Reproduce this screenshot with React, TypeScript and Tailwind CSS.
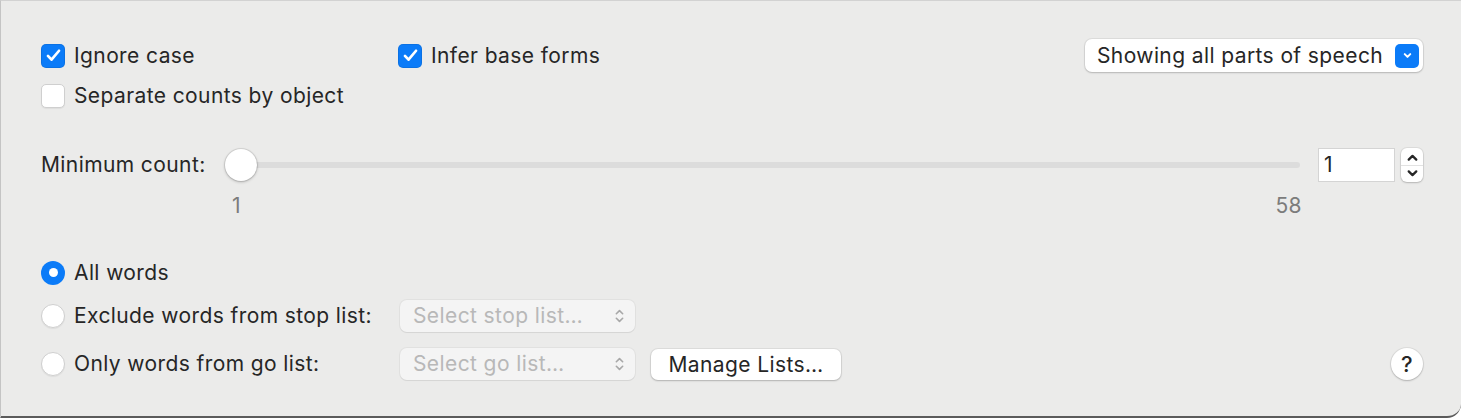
import React from "react";

const font = { fontFamily: "Inter, 'Noto Sans', sans-serif", letterSpacing: "0.4px" };

function Check() {
  return (
    <svg viewBox="0 0 24 24" className="w-[19px] h-[19px]" fill="none">
      <path d="M5 12.5l4.5 4.8L19 6" stroke="white" strokeWidth="3.4" strokeLinecap="round" strokeLinejoin="round" />
    </svg>
  );
}

function Checkbox({ checked, label }: { checked?: boolean; label: string }) {
  return (
    <label className="flex items-center gap-[9px]">
      {checked ? (
        <span className="w-[24px] h-[24px] rounded-[5px] bg-[#0b7bf8] flex items-center justify-center shadow-[inset_0_0_0_1px_rgba(0,0,0,0.08)]">
          <Check />
        </span>
      ) : (
        <span className="w-[24px] h-[24px] rounded-[5px] bg-white border border-[#cfcfcf] shadow-[0_1px_1px_rgba(0,0,0,0.06)]" />
      )}
      <span className="text-[21px] text-[#262626]">{label}</span>
    </label>
  );
}

function Radio({ checked, label }: { checked?: boolean; label: string }) {
  return (
    <label className="flex items-center gap-[9px]">
      {checked ? (
        <span className="w-[24px] h-[24px] rounded-full bg-[#0b7bf8] flex items-center justify-center">
          <span className="w-[9px] h-[9px] rounded-full bg-white" />
        </span>
      ) : (
        <span className="w-[24px] h-[24px] rounded-full bg-white border border-[#cfcfcf] shadow-[0_1px_1px_rgba(0,0,0,0.06)]" />
      )}
      <span className="text-[21px] text-[#262626]">{label}</span>
    </label>
  );
}

function UpDown({ color }: { color: string }) {
  return (
    <svg viewBox="0 0 12 20" className="w-[11px] h-[18px]" fill="none" stroke={color} strokeWidth="1.8" strokeLinecap="round" strokeLinejoin="round">
      <path d="M2.5 7.5L6 4l3.5 3.5" />
      <path d="M2.5 12.5L6 16l3.5-3.5" />
    </svg>
  );
}

function DisabledSelect({ text }: { text: string }) {
  return (
    <div className="w-[235px] h-[32px] rounded-[7px] bg-[#f4f4f4] shadow-[0_0_0_1px_rgba(0,0,0,0.04),0_1px_1px_rgba(0,0,0,0.06)] flex items-center justify-between pl-[13px] pr-[10px]">
      <span className="text-[21px] text-[#b8b8b8]">{text}</span>
      <UpDown color="#a8a8a8" />
    </div>
  );
}

export default function App() {
  return (
    <div
      style={font}
      className="w-[1461px] h-[418px] bg-[#ebebea] border-t border-t-[#d2d2d2] border-l border-l-[#c4c4c4] border-b-2 border-b-[#5b5b5b] rounded-br-[14px] overflow-hidden"
    >
      <div className="pl-[40px] pr-[38px] pt-[38px]">
        {/* options row */}
        <div className="flex items-center justify-between h-[33px]">
          <div className="flex items-center">
            <div className="w-[357px]">
              <Checkbox checked label="Ignore case" />
            </div>
            <Checkbox checked label="Infer base forms" />
          </div>
          <div className="h-[33px] w-[338px] rounded-[7px] bg-white shadow-[0_0_0_1px_rgba(0,0,0,0.06),0_1px_2px_rgba(0,0,0,0.18)] flex items-center justify-between pl-[12px] pr-[4px]">
            <span className="text-[21px] text-[#262626]">Showing all parts of speech</span>
            <span className="w-[24px] h-[24px] rounded-[5px] bg-[#0b7bf8] flex items-center justify-center">
              <svg viewBox="0 0 12 12" className="w-[11px] h-[11px]" fill="none" stroke="white" strokeWidth="2.2" strokeLinecap="round" strokeLinejoin="round">
                <path d="M3 4.5L6 7.5l3-3" />
              </svg>
            </span>
          </div>
        </div>

        <div className="mt-[12px] h-[24px] flex items-center">
          <Checkbox label="Separate counts by object" />
        </div>

        {/* minimum count slider */}
        <div className="mt-[40px] h-[34px] flex items-center">
          <span className="text-[21px] text-[#262626] w-[184px]">Minimum count:</span>
          <div className="relative flex-1 h-[34px] flex items-center">
            <div className="ml-[16px] flex-1 h-[6px] rounded-full bg-[#dcdcdc]" />
            <span className="absolute left-0 top-[1px] w-[32px] h-[32px] rounded-full bg-white shadow-[0_0_0_1px_rgba(0,0,0,0.08),0_1px_3px_rgba(0,0,0,0.25)]" />
          </div>
          <div className="ml-[18px] w-[77px] h-[34px] bg-white border border-[#d4d4d4] flex items-center pl-[5px]">
            <span className="text-[21px] text-[#262626]">1</span>
          </div>
          <div className="ml-[6px] w-[22px] h-[34px] rounded-[6px] bg-white shadow-[0_0_0_1px_rgba(0,0,0,0.06),0_1px_2px_rgba(0,0,0,0.18)] flex flex-col items-center justify-center">
            <svg viewBox="0 0 12 10" className="w-[13px] h-[11px] mb-[2px]" fill="none" stroke="#262626" strokeWidth="2.1" strokeLinecap="round" strokeLinejoin="round">
              <path d="M2.5 7L6 3.5 9.5 7" />
            </svg>
            <div className="w-[22px] h-px bg-[#e2e2e2]" />
            <svg viewBox="0 0 12 10" className="w-[13px] h-[11px] mt-[2px]" fill="none" stroke="#262626" strokeWidth="2.1" strokeLinecap="round" strokeLinejoin="round">
              <path d="M2.5 3L6 6.5 9.5 3" />
            </svg>
          </div>
        </div>
        <div className="mt-[8px] flex w-[1261px]">
          <span className="ml-[191px] text-[21px] text-[#7c7c7c]">1</span>
          <span className="ml-auto text-[21px] text-[#7c7c7c]">58</span>
        </div>

        {/* word filter */}
        <div className="mt-[39px] h-[24px] flex items-center">
          <Radio checked label="All words" />
        </div>
        <div className="mt-[15px] h-[32px] flex items-center">
          <div className="w-[359px]">
            <Radio label="Exclude words from stop list:" />
          </div>
          <DisabledSelect text="Select stop list…" />
        </div>
        <div className="mt-[16px] h-[33px] flex items-center">
          <div className="w-[359px]">
            <Radio label="Only words from go list:" />
          </div>
          <DisabledSelect text="Select go list…" />
          <button className="ml-[16px] w-[190px] h-[31px] rounded-[7px] bg-white shadow-[0_0_0_1px_rgba(0,0,0,0.06),0_1px_2px_rgba(0,0,0,0.2)] text-[21px] text-[#262626]">
            Manage Lists…
          </button>
          <button className="ml-auto w-[32px] h-[32px] rounded-full bg-white shadow-[0_0_0_1px_rgba(0,0,0,0.06),0_1px_2px_rgba(0,0,0,0.2)] text-[22px] font-medium text-[#262626] flex items-center justify-center">
            ?
          </button>
        </div>
      </div>
    </div>
  );
}
